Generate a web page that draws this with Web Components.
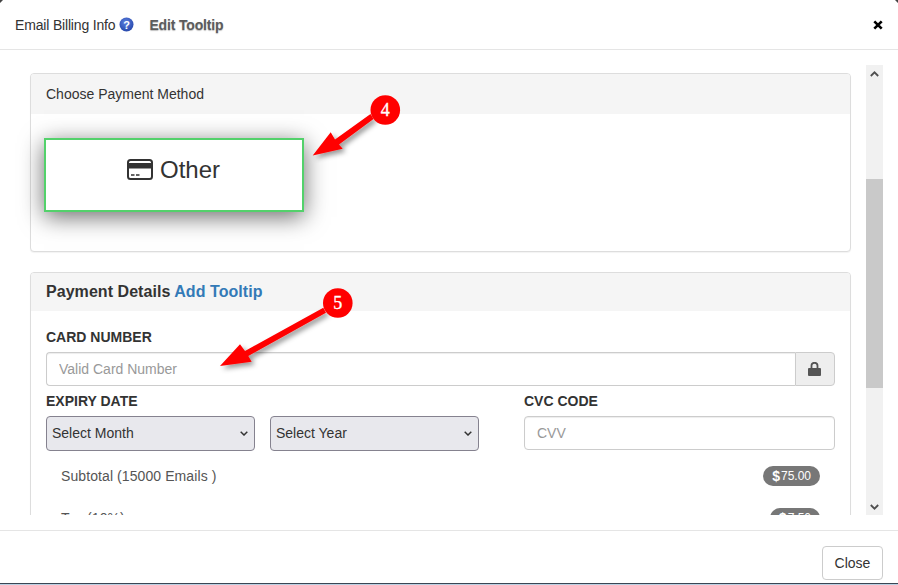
<!DOCTYPE html>
<html><head><meta charset="utf-8"><title>Email Billing Info</title>
<style>
html,body{margin:0;height:100%;background:#fff}
body{font:14px/20px "Liberation Sans",Arial,sans-serif;color:#333;overflow:hidden}
</style></head><body>
<billing-modal></billing-modal>
<script>
function def(name, css, html, init){
  customElements.define(name, class extends HTMLElement{
    constructor(){super();const r=this.attachShadow({mode:'open'});r.innerHTML='<style>'+css+'</style>'+html;}
    connectedCallback(){if(init)init(this);}
  });
}
def('pay-panel',`
:host{display:block;border:1px solid #ddd;border-radius:4px;background:#fff;box-shadow:0 1px 1px rgba(0,0,0,.05);margin-bottom:20px}
header{background:#f5f5f5;padding:10px 15px;color:#333;border-radius:3px 3px 0 0}
`,`<header><slot name="head"></slot></header><slot></slot>`);
def('method-card',`
:host{display:flex;width:260px;height:74px;box-sizing:border-box;border:2px solid #53d16b;box-shadow:0 5px 22px rgba(0,0,0,.58);justify-content:center;align-items:flex-start;padding-top:13px;gap:6px;font-size:24px;line-height:34px;color:#333;background:#fff}
svg{width:26px;height:21px;margin-top:6px;transform:translateX(-1px)}
`,`<svg viewBox="0 0 26 21"><rect x="1" y="1" width="24" height="19" rx="2.5" fill="none" stroke="#333" stroke-width="2"/><rect x="1" y="4" width="24" height="5.500" fill="#333"/><path d="M4 16h3.500M9 16h3.500" stroke="#333" stroke-width="1.500"/></svg><span><slot></slot></span>`);
def('field-label',`
:host{display:block;font-weight:bold;font-size:14px;line-height:20px;color:#333;margin-bottom:5px}
`,`<slot></slot>`);
def('text-field',`
:host{display:flex;height:34px}
input{flex:1;min-width:0;box-sizing:border-box;height:34px;border:1px solid #ccc;border-radius:4px;padding:6px 12px;font:14px/20px "Liberation Sans",Arial,sans-serif;color:#555;box-shadow:inset 0 1px 1px rgba(0,0,0,.075);outline:0}
input::placeholder{color:#999;opacity:1}
:host([addon]) input{border-radius:4px 0 0 4px;border-right:0}
.addon{display:none;width:37px;border:1px solid #ccc;border-radius:0 4px 4px 0;background:#eee;align-items:center;justify-content:center;padding-right:1px}
:host([addon]) .addon{display:flex}
svg{width:13px;height:14px}
`,`<input><span class="addon"><svg viewBox="0 0 13 14"><path d="M1 6h11a1 1 0 0 1 1 1v6a1 1 0 0 1-1 1h-11a1 1 0 0 1-1-1v-6a1 1 0 0 1 1-1z" fill="#555"/><path d="M3.500 6.500V3.800a3 3 0 0 1 6 0v2.700" fill="none" stroke="#555" stroke-width="1.800"/></svg></span>`,
 el=>{el.shadowRoot.querySelector('input').placeholder=el.getAttribute('hint')||'';});
def('select-box',`
:host{display:block;position:relative}
select{display:block;width:100%;height:35px;box-sizing:border-box;appearance:none;-webkit-appearance:none;border:1px solid #85828f;border-radius:4px;background-color:#e8e8ed;color:#333;font:14px "Liberation Sans",Arial,sans-serif;padding:0 5px 2px;outline:0}
svg{position:absolute;right:7px;top:15px;width:8px;height:5px;pointer-events:none}
`,`<select><option></option></select><svg viewBox="0 0 8 5"><path d="M.7.8L4 4 7.300.8" fill="none" stroke="#333" stroke-width="1.500"/></svg>`,
 el=>{el.shadowRoot.querySelector('option').textContent=el.getAttribute('label')||'';});
def('sum-row',`
:host{display:flex;justify-content:space-between;align-items:center;height:20px;padding:0 15px;margin-bottom:22px;color:#555}
.lab{letter-spacing:.09px}
.badge{background:#777;color:#fff;border-radius:10px;padding:0 9px;height:20px;font-size:12px;line-height:20px;display:inline-flex;align-items:center}
.badge b{font-size:14px;font-weight:bold;margin-right:1px}
`,`<span class="lab"><slot></slot></span><span class="badge"><b>$</b><slot name="amount"></slot></span>`);
def('fake-scrollbar',`
:host{display:flex;flex-direction:column;width:17px;background:#f1f1f1;flex:none}
.btn{height:17px;display:flex;align-items:center;justify-content:center;flex:none}
.thumb{height:209px;background:#c9c9c9;margin-top:97px;flex:none}
.sp{flex:1}
svg{width:9px;height:6px}
`,`<div class="btn"><svg viewBox="0 0 9 6"><path d="M.8 5L4.500 1.300 8.200 5" fill="none" stroke="#505050" stroke-width="1.800"/></svg></div><div class="thumb"></div><div class="sp"></div><div class="btn"><svg viewBox="0 0 9 6"><path d="M.8 1L4.500 4.700 8.200 1" fill="none" stroke="#505050" stroke-width="1.800"/></svg></div>`);
def('callout-arrows',`
:host{position:absolute;left:0;top:0;width:898px;height:585px;pointer-events:none;z-index:5}
svg{display:block;position:absolute;left:0;top:0}
text{font:18px "Liberation Serif",serif;fill:#fff;stroke:#fff;stroke-width:.35px;text-anchor:middle}
`,`<svg width="898" height="585" viewBox="0 0 898 585">
<defs><filter id="s" x="-30%" y="-30%" width="170%" height="170%"><feDropShadow dx="3" dy="3" stdDeviation="2.500" flood-color="#000" flood-opacity=".4"/></filter></defs>
<path filter="url(#s)" d="M312.700 155.500L330.700 132.300 335 139.500 370.500 114 373.500 119 339 144.500 342.700 148.700z" fill="#f00"/>
<circle cx="385.300" cy="110" r="14.800" fill="#f00"/>
<path filter="url(#s)" d="M220 366L240 344.300 245 351 323.300 307.700 326 312.700 248.300 356 251.700 361.700z" fill="#f00"/>
<circle cx="337.800" cy="303" r="14.800" fill="#f00"/>
<text x="385.300" y="116">4</text><text x="337.800" y="308.500">5</text>
<path d="M0 0h3L0 3zM898 0h-3l3 3z" fill="#444"/></svg>`);
def('billing-modal',`
:host{display:flex;flex-direction:column;height:585px;box-sizing:border-box;background:#fff;border-bottom:1px solid #bcd0e2;position:relative}
.head{display:flex;align-items:center;height:49px;flex:none;box-sizing:border-box;padding:0 15px;color:#333}
.ttl{letter-spacing:-.17px}
.q{width:15px;height:15px;margin-left:4px;flex:none}
.edit{margin-left:15px;font-weight:bold;color:#5c5c5c;letter-spacing:-.17px;text-shadow:0 1px 1px rgba(0,0,0,.25)}
.x{margin-left:auto;width:10px;height:10px;flex:none}
.rule{height:1px;background:#e5e5e5;flex:none}
.mid{flex:none;height:450px;margin:15px 15px 0;display:flex}
.scroll{flex:1;min-width:0;overflow:hidden;padding:8px 15px 0}
.body1{padding:24px 13px 39px}
.body2{padding:16px 15px 0}
.h2{font-size:16px;font-weight:bold;line-height:18px;display:block;letter-spacing:.05px}
.h2 a{color:#337ab7;text-decoration:none}
.row{display:grid;grid-template-columns:209px 209px 311px;column-gap:15px;margin-bottom:15px;margin-top:5px}
.row .c3{margin-left:30px;margin-right:-30px}
.foot{height:53px;flex:none;box-sizing:border-box;margin-top:15px;border-top:1px solid #e5e5e5;display:flex;justify-content:flex-end;align-items:flex-start;padding:15px 15px 0}
.edge{height:1px;background:#3a4654;flex:none}
button{width:61px;height:34px;box-sizing:border-box;border:1px solid #ccc;border-radius:4px;background:#fff;color:#333;font:14px/20px "Liberation Sans",Arial,sans-serif;padding:0}
`,`<div class="head"><span class="ttl">Email Billing Info</span>
<svg class="q" viewBox="0 0 15 15"><defs><radialGradient id="g" cx=".45" cy=".35" r=".7"><stop offset="0" stop-color="#5d80e0"/><stop offset="1" stop-color="#2344a8"/></radialGradient></defs><circle cx="7.500" cy="7.500" r="7" fill="url(#g)"/><text x="7.500" y="11.500" text-anchor="middle" fill="#fff" font-family="Liberation Sans" font-weight="bold" font-size="11">?</text></svg>
<span class="edit">Edit Tooltip</span>
<svg class="x" viewBox="0 0 10 10"><path d="M1.300 1.300L8.700 8.700M8.700 1.300L1.300 8.700" stroke="#000" stroke-width="2.600"/></svg></div>
<div class="rule"></div>
<div class="mid"><div class="scroll">
<pay-panel><span slot="head">Choose Payment Method</span><div class="body1"><method-card>Other</method-card></div></pay-panel>
<pay-panel><span slot="head" class="h2">Payment Details <a href="#">Add Tooltip</a></span>
<div class="body2">
<field-label>CARD NUMBER</field-label>
<text-field addon hint="Valid Card Number"></text-field>
<div class="row"><field-label style="grid-column:1/3">EXPIRY DATE</field-label><field-label class="c3">CVC CODE</field-label>
<select-box label="Select Month"></select-box><select-box label="Select Year"></select-box><text-field class="c3" hint="CVV"></text-field></div>
<sum-row>Subtotal (15000 Emails )<span slot="amount">75.00</span></sum-row>
<sum-row>Tax (10%)<span slot="amount">7.50</span></sum-row>
</div></pay-panel>
</div><fake-scrollbar></fake-scrollbar></div>
<div class="foot"><button>Close</button></div>
<div class="edge"></div>
<callout-arrows></callout-arrows>`);
</script>
</body></html>
